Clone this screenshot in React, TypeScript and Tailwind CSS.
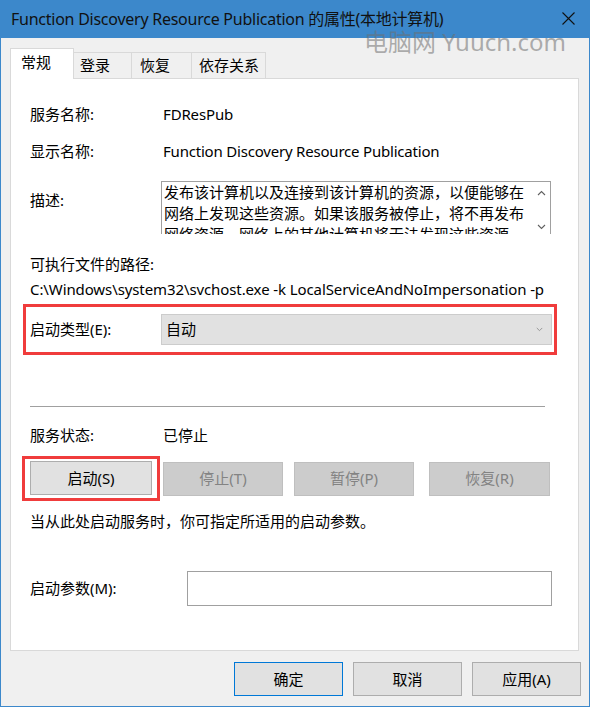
import React from "react";

const Chevron = ({ up = false, className = "" }: { up?: boolean; className?: string }) => (
  <svg width="9" height="6" viewBox="0 0 9 6" className={className}>
    <path
      d={up ? "M1 5 L4.5 1.5 L8 5" : "M1 1 L4.5 4.5 L8 1"}
      fill="none"
      stroke="currentColor"
      strokeWidth="1.1"
    />
  </svg>
);

const Btn = ({
  label,
  disabled = false,
  className = "",
}: {
  label: string;
  disabled?: boolean;
  className?: string;
}) => (
  <div
    className={`h-[34px] flex items-center justify-center text-[15px] border ${
      disabled ? "bg-[#cccccc] border-[#bfbfbf] text-[#838383]" : "bg-[#e1e1e1] border-[#adadad] text-black"
    } ${className}`}
  >
    {label}
  </div>
);

export default function App() {
  return (
    <div className="w-[590px] h-[707px] flex flex-col bg-[#f0f0f0] border-x border-b border-[#3c88cb] text-[15px] text-black font-['Noto_Sans','Noto_Sans_CJK_SC',sans-serif] relative overflow-hidden">
      {/* title bar */}
      <div className="h-[38px] -mx-px bg-[#3c88cb] flex items-center justify-between pl-[11px] pr-[15px] shrink-0">
        <span className="text-[16px] text-[#111] tracking-[-0.25px]">
          Function Discovery Resource Publication 的属性(本地计算机)
        </span>
        <svg width="13" height="13" viewBox="0 0 13 13" className="-mt-px">
          <path d="M0.5 0.5 L12.5 12.5 M12.5 0.5 L0.5 12.5" stroke="#111" strokeWidth="1.1" />
        </svg>
      </div>

      {/* watermark */}
      <div className="absolute left-[363px] top-[30px] text-[24px] leading-[24px] text-[#6e6e6e]/55 whitespace-nowrap pointer-events-none">
        电脑网 Yuucn.com
      </div>

      <div className="flex-1 flex flex-col pl-[9px] pr-[8px]">
        {/* tabs */}
        <div className="flex items-end h-[41px] pt-[11px] relative z-10">
          <div className="w-[64px] h-[31px] bg-white border border-b-0 border-[#d9d9d9] pl-[10px] pt-[2px]">常规</div>
          <div className="w-[58px] h-[27px] border-t border-r border-[#d9d9d9] pl-[6px] pt-[1px]">登录</div>
          <div className="w-[60px] h-[27px] border-t border-r border-[#d9d9d9] pl-[8px] pt-[1px]">恢复</div>
          <div className="w-[74px] h-[27px] border-t border-r border-[#d9d9d9] pl-[7px] pt-[1px]">依存关系</div>
        </div>

        {/* panel */}
        <div className="-mt-px w-[569px] h-[573px] bg-white border border-[#d9d9d9] flex flex-col pl-[19px] pt-[25px]">
          <div className="flex h-[20px] items-center">
            <span className="w-[133px]">服务名称:</span>
            <span className="tracking-[-0.15px]">FDResPub</span>
          </div>
          <div className="flex h-[20px] items-center mt-[17px]">
            <span className="w-[133px]">显示名称:</span>
            <span className="tracking-[-0.2px]">Function Discovery Resource Publication</span>
          </div>
          <div className="flex mt-[20px]">
            <span className="w-[131px] mt-[8px]">描述:</span>
            <div className="w-[390px] h-[53px] border border-b-0 border-[#a0a0a0] flex overflow-hidden">
              <div className="flex-1 pl-[2px] text-[15px] leading-[21px]">
                发布该计算机以及连接到该计算机的资源，以便能够在网络上发现这些资源。如果该服务被停止，将不再发布网络资源，网络上的其他计算机将无法发现这些资源。
              </div>
              <div className="w-[17px] flex flex-col items-center justify-between pt-[8px] pb-[4px] text-[#606060]">
                <Chevron up />
                <Chevron />
              </div>
            </div>
          </div>
          <div className="h-[20px] flex items-center mt-[20px]">可执行文件的路径:</div>
          <div className="h-[20px] flex items-center mt-[5px] tracking-[-0.1px]">
            C:\Windows\system32\svchost.exe -k LocalServiceAndNoImpersonation -p
          </div>

          <div className="-ml-[7px] mt-[5px] w-[534px] h-[51px] border-[3px] border-[#f03c3c] flex items-center pl-[4px]">
            <span className="w-[131px]">启动类型(E):</span>
            <div className="w-[391px] h-[31px] bg-[#e1e1e1] border border-[#cccccc] flex items-center justify-between pl-[4px] pr-[8px]">
              <span>自动</span>
              <Chevron className="text-[#8a8a8a] w-[7px] h-[5px]" />
            </div>
          </div>

          <div className="mt-[51px] w-[515px] h-px bg-[#a0a0a0]" />

          <div className="flex h-[20px] items-center mt-[18px]">
            <span className="w-[133px]">服务状态:</span>
            <span>已停止</span>
          </div>

          <div className="flex items-center mt-[11px]">
            <div className="-ml-[8px] w-[138px] h-[45px] border-[3px] border-[#f03c3c] pl-[5px] pt-[2px]">
              <Btn label="启动(S)" className="w-[122px]" />
            </div>
            <Btn label="停止(T)" disabled className="w-[120px] ml-[3px]" />
            <Btn label="暂停(P)" disabled className="w-[120px] ml-[11px]" />
            <Btn label="恢复(R)" disabled className="w-[121px] ml-[15px]" />
          </div>

          <div className="h-[20px] flex items-center mt-[10px]">
            当从此处启动服务时，你可指定所适用的启动参数。
          </div>

          <div className="flex items-center mt-[40px]">
            <span className="w-[157px]">启动参数(M):</span>
            <div className="w-[365px] h-[35px] border border-[#a0a0a0] bg-white" />
          </div>
        </div>

        {/* footer buttons */}
        <div className="flex justify-end gap-[10px] mt-[11px]">
          <div className="w-[109px] h-[34px] bg-[#e1e1e1] border border-[#0078d7] flex items-center justify-center">确定</div>
          <div className="w-[109px] h-[34px] bg-[#e1e1e1] border border-[#adadad] flex items-center justify-center">取消</div>
          <div className="w-[109px] h-[34px] bg-[#e1e1e1] border border-[#adadad] flex items-center justify-center">应用(A)</div>
        </div>
      </div>
    </div>
  );
}
